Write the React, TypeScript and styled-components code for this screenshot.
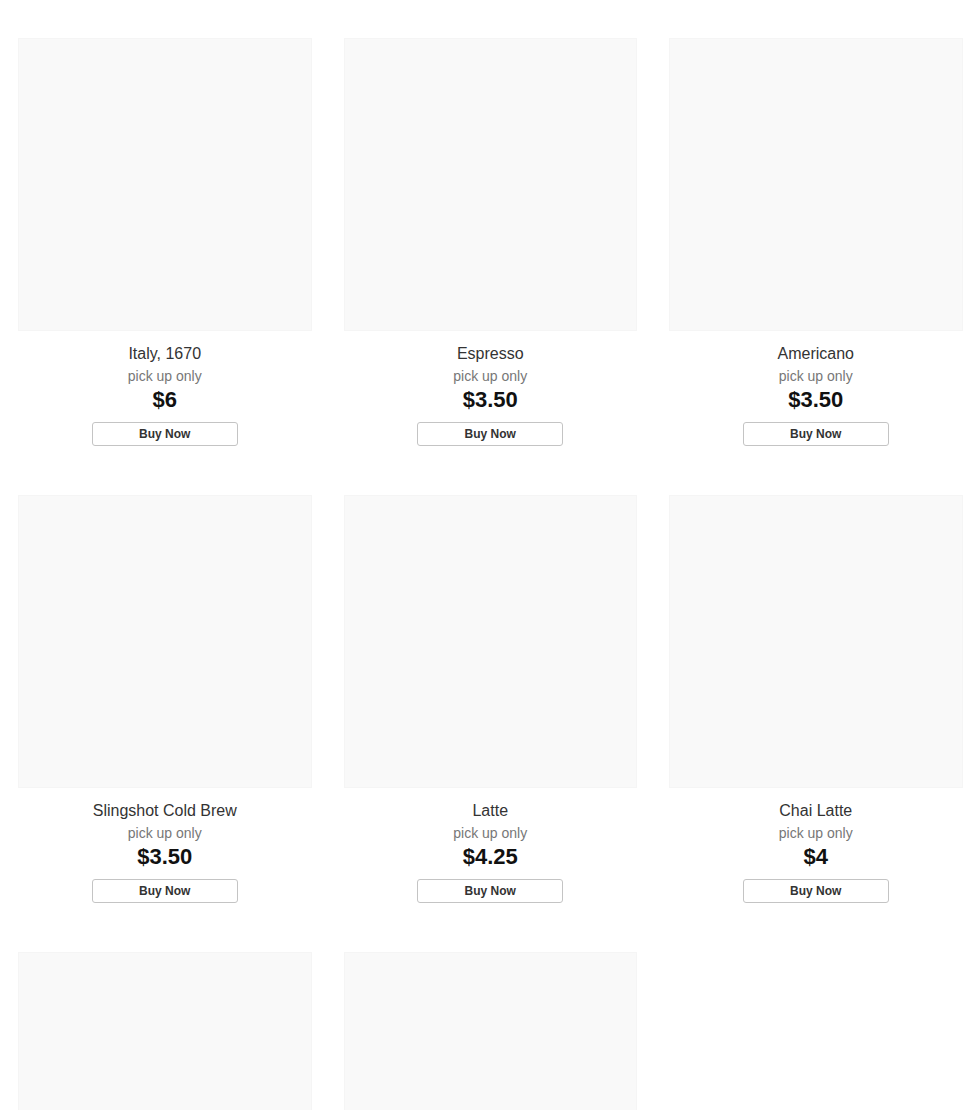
import styled, { createGlobalStyle } from "styled-components";

const GlobalStyle = createGlobalStyle`
  html, body {
    margin: 0;
    padding: 0;
    background: #fff;
    font-family: "Liberation Sans", Arial, sans-serif;
  }
`;

const products = [
  { name: "Italy, 1670", price: "$6" },
  { name: "Espresso", price: "$3.50" },
  { name: "Americano", price: "$3.50" },
  { name: "Slingshot Cold Brew", price: "$3.50" },
  { name: "Latte", price: "$4.25" },
  { name: "Chai Latte", price: "$4" },
  { name: "Mocha", price: "$4.50" },
  { name: "Cappuccino", price: "$4" },
];

const App = () => {
  return (
    <>
      <GlobalStyle />
      <Grid>
        {products.map((p) => (
          <Card key={p.name}>
            <Thumb />
            <Title>{p.name}</Title>
            <Note>pick up only</Note>
            <Price>{p.price}</Price>
            <BuyButton>Buy Now</BuyButton>
          </Card>
        ))}
      </Grid>
    </>
  );
};

export default App;

const Grid = styled.div`
  display: grid;
  grid-template-columns: repeat(3, 293.5px);
  column-gap: 32px;
  row-gap: 49px;
  padding: 38px 0 40px 18px;
`;

const Card = styled.div`
  display: flex;
  flex-direction: column;
  align-items: center;
  text-align: center;
`;

const Thumb = styled.div`
  width: 100%;
  height: 293px;
  background: #f9f9f9;
  border: 1px solid #f5f5f5;
  box-sizing: border-box;
`;

const Title = styled.div`
  margin-top: 13px;
  font-size: 16px;
  line-height: 20px;
  color: #333;
`;

const Note = styled.div`
  margin-top: 2px;
  font-size: 14px;
  line-height: 20px;
  color: #777;
`;

const Price = styled.div`
  margin-top: 1px;
  font-size: 22px;
  line-height: 26px;
  font-weight: bold;
  color: #111;
`;

const BuyButton = styled.button`
  margin-top: 9px;
  width: 146px;
  height: 24px;
  padding: 0;
  background: #fff;
  border: 1px solid #c4c4c4;
  border-radius: 3px;
  font-family: "Liberation Sans", Arial, sans-serif;
  font-size: 12px;
  font-weight: bold;
  color: #333;
  cursor: pointer;
`;
